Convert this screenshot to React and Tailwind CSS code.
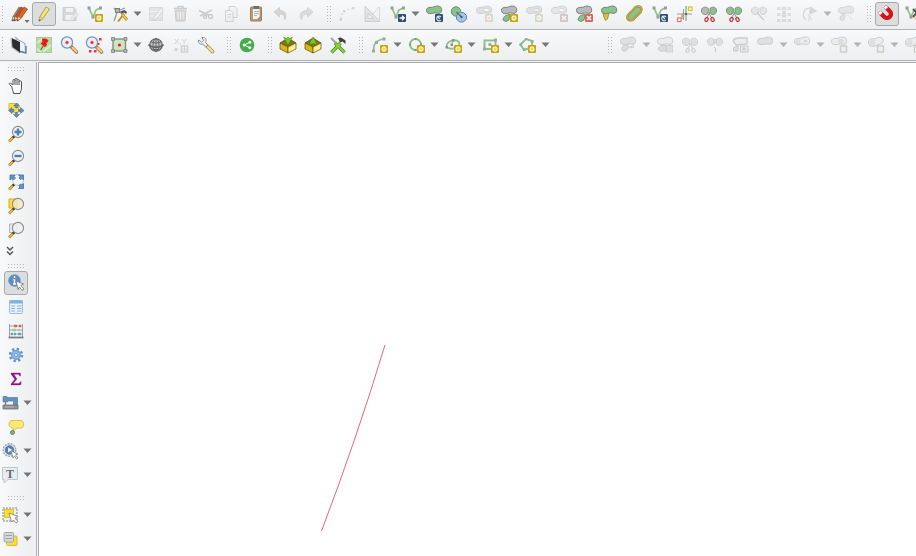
import React from "react";

const GREEN = "#8ac18c";
const EDGE = "#6f8a70";
const GREY = "#b9bab9";
const GREY_EDGE = "#7e7f7e";

/* ---------- shared glyph parts ---------- */

function Star({ x = 13, y = 12 }) {
  const cx = x + 4;
  const cy = y + 4;
  return (
    <g>
      <rect x={x} y={y} width="8" height="8" rx="1" fill="#c9a50c" />
      <path
        d={`M${cx} ${cy - 3}V${cy + 3}M${cx - 3} ${cy}H${cx + 3}M${cx - 2} ${cy - 2}L${cx + 2} ${cy + 2}M${cx - 2} ${cy + 2}L${cx + 2} ${cy - 2}`}
        stroke="#fff6c8"
        strokeWidth="1.1"
      />
      <circle cx={cx} cy={cy} r="0.8" fill="#c9a50c" />
    </g>
  );
}

function Cross({ x = 13, y = 12 }) {
  return (
    <g>
      <rect x={x} y={y} width="8" height="8" rx="1" fill="#e0625d" />
      <path d={`M${x + 2} ${y + 2}l4 4m0 -4l-4 4`} stroke="#fff" strokeWidth="1.6" />
    </g>
  );
}

function Turn({ x = 13, y = 12 }) {
  return (
    <g>
      <rect x={x} y={y} width="8" height="8" rx="1" fill="#2f4e70" />
      <path d={`M${x + 6} ${y + 3}A2.4 2.4 0 1 0 ${x + 6} ${y + 6}M${x + 2} ${y + 2}l3 3`} stroke="#dfe7f0" strokeWidth="1.1" fill="none" />
    </g>
  );
}

const BLOB = "M4.500 8.500C4.300 6 6.500 5.200 9 5.400C11.500 5.600 12.500 4 15.500 4C18.500 4 20 6 19.700 8.500C19.400 11 17.500 11.800 15.500 11.200C13 10.500 11.500 11.300 9 11.600C6.500 11.900 4.700 11 4.500 8.500Z";

function Blob({ fill = GREEN, edge = EDGE }) {
  return <path d={BLOB} fill={fill} stroke={edge} strokeWidth="1" />;
}

function Lobes({ left, right }) {
  return (
    <g>
      <path d="M11.300 6.500C9.500 4.500 5 4.500 4.500 8C4.200 11 6.500 13 9 12.500C10.500 12.200 11.300 11 11.300 9.500Z" fill={left} stroke={EDGE} strokeWidth="0.9" />
      <path d="M13 6.500C14.500 4.500 19 4.500 19.500 8C19.800 11 17.500 13 15.300 12.500C13.800 12.200 13 11 13 9.500Z" fill={right} stroke={EDGE} strokeWidth="0.9" />
    </g>
  );
}

function Shears({ left, right, blade = "#c4393d" }) {
  return (
    <g>
      <Lobes left={left} right={right} />
      <path d="M11.500 10L14.500 15.500M12.800 10L10 15.500" stroke="#999" strokeWidth="1.100" />
      <ellipse cx="9.500" cy="17.500" rx="1.500" ry="2" transform="rotate(30 9.500 17.500)" fill="#f6e9e9" stroke={blade} strokeWidth="1.300" />
      <ellipse cx="15.500" cy="17.500" rx="1.500" ry="2" transform="rotate(-30 15.500 17.500)" fill="#f6e9e9" stroke={blade} strokeWidth="1.300" />
    </g>
  );
}

function Vee() {
  return (
    <g>
      <path d="M7 6L11 15L14 8L18 6" fill="none" stroke={GREEN} strokeWidth="1.700" />
      <path d="M5.500 4.500h3v3h-3zM9.500 13.500h3v3h-3zM17 4.500h3v3h-3z" fill="#979d97" />
    </g>
  );
}

function Lens({ inner, face = "#eef0f0", rim = "#8a8d8e" }) {
  return (
    <g>
      <path d="M10 14.500L5 19.500" stroke="#a6812d" strokeWidth="2.600" />
      <path d="M8.500 16L5 19.500" stroke="#f0b93c" strokeWidth="1.400" />
      <path d="M10.500 14L9 15.500" stroke="#333" strokeWidth="2.400" />
      <circle cx="14" cy="10" r="5.600" fill={face} fillOpacity="0.85" stroke={rim} strokeWidth="1.100" />
      {inner}
    </g>
  );
}

function BigLens({ children }) {
  return (
    <g>
      <path d="M14.500 14L19.500 19" stroke="#a37a3a" strokeWidth="3.600" strokeLinecap="round" />
      <path d="M15.500 14.800L19.500 18.800" stroke="#f9c987" strokeWidth="2" strokeLinecap="round" />
      <circle cx="10" cy="9.500" r="5.600" fill="#e4f0fc" stroke="#7d93b5" strokeWidth="1.300" />
      <circle cx="10" cy="9.500" r="1.700" fill="#fb1c1c" stroke="#fbb" strokeWidth="0.6" />
      {children}
    </g>
  );
}

function Pencil({ color, edge, x = 0, shine = true }) {
  return (
    <g transform={`translate(${x} 0)`}>
      <path d="M7 19L8 14.500L14 5L17.500 7L11 16.500Z" fill={color} stroke={edge} strokeWidth="0.8" />
      {shine && <path d="M10 15L15.700 6" stroke="#fff" strokeOpacity="0.5" strokeWidth="1" />}
      <path d="M7 19L8 14.500L11 16.500Z" fill="#ecd9b3" stroke={edge} strokeWidth="0.5" />
      <path d="M7 19.300L7.600 17.200L8.800 18Z" fill="#333" />
    </g>
  );
}

function Arrowhead() {
  return <path d="M0.500 0.500H8.500L4.500 5Z" fill="#747677" />;
}

function BoxIcon({ up }) {
  return (
    <g>
      <path d="M4 10L12 5L20 10L12 14Z" fill="#8a7216" stroke="#4c3f08" strokeWidth="0.7" />
      <path d="M4 10L12 14V20L4 16Z" fill="#d9b714" stroke="#5e4f0b" strokeWidth="0.7" />
      <path d="M20 10L12 14V20L20 16Z" fill="#fbef8b" stroke="#5e4f0b" strokeWidth="0.7" />
      {up ? (
        <path d="M12 4L16 11.500L12 10.500L8 11.500Z" fill="#6fd021" stroke="#467d16" strokeWidth="0.5" />
      ) : (
        <path d="M7.500 4L10.500 5.500L12 4L13.500 5.500L16.500 4L12 12Z" fill="#6fd021" stroke="#467d16" strokeWidth="0.5" />
      )}
    </g>
  );
}

const NODE = "#a2a5a2";

/* ---------- icons ---------- */

const icons = {
  edits: (
    <g>
      <Pencil color="#a3816f" edge="#85766f" x={-2} shine={false} />
      <Pencil color="#b9573a" edge="#8d4a36" x={0} shine={false} />
      <Pencil color="#dc6627" edge="#a3501f" x={3} shine={false} />
      <path d="M17.500 18H22.500L20 21Z" fill="#6c6e70" />
    </g>
  ),
  pencil: <Pencil color="#f4dc55" edge="#a0964f" />,
  save: (
    <g>
      <path d="M6 5.500H17L19 7.500V18.500H6Z" fill="#a2a4a4" stroke="#858787" />
      <path d="M9 6H16V10H9ZM8.500 13H16V18H8.500Z" fill="#eee" />
      <path d="M13 19L14 16L19 10L21 12L16 18Z" fill="#ddd" stroke="#999" strokeWidth="0.7" />
    </g>
  ),
  addLine: (<g><Vee /><Star /></g>),
  vertex: (
    <g>
      <path d="M7 19L10 11M10 10L7 6M13 8L18 6" fill="none" stroke="#959a98" strokeWidth="1.300" />
      <rect x="8.500" y="6.500" width="4" height="4" fill="#b2b6b3" stroke="#7c807d" />
      <path d="M11 19.500L17 12" stroke="#b68a2a" strokeWidth="1.800" />
      <path d="M15 12L20 18" stroke="#b68410" strokeWidth="2.800" />
      <path d="M15.500 12.500L20 18" stroke="#ffd33c" strokeWidth="1.400" />
      <path d="M13 9.500L17.500 8L20 10L19 12L17 10.500L14 12Z" fill="#555" />
    </g>
  ),
  table: (
    <g>
      <path d="M5.500 5.500H18.500V18.500H5.500Z" fill="#c4c5c5" stroke="#aaa" />
      <path d="M5.500 9.500H18.500M5.500 14H18.500" stroke="#eee" />
      <path d="M9 18L10 15L17 6L19.500 8L12.500 17Z" fill="#eee" stroke="#999" strokeWidth="0.8" />
    </g>
  ),
  trash: (
    <g>
      <path d="M6 8H17L16 19H7Z" fill="#cf9b90" stroke="#9b7f7a" />
      <path d="M5 6.500H18M9 6V4.500H14V6" fill="none" stroke="#9b7f7a" strokeWidth="1.600" />
      <path d="M9 10V17M11.500 10V17M14 10V17" stroke="#f3e5e2" />
    </g>
  ),
  cut: (
    <g fill="none" stroke="#7d7d7d">
      <path d="M5 8.500L15 13.500M6 14L18 8" strokeWidth="1.700" />
      <circle cx="16.500" cy="14.500" r="2" strokeWidth="1.300" />
      <circle cx="11" cy="15" r="1.500" strokeWidth="1.300" />
    </g>
  ),
  copy: (
    <g fill="#eee" stroke="#909090">
      <path d="M10 4.500H16L18 6.500V15.500H10Z" />
      <path d="M6.500 8.500H12L14 10.500V19.500H6.500Z" />
      <path d="M8.500 12.500H12M8.500 15H12" />
    </g>
  ),
  paste: (
    <g>
      <rect x="6.500" y="5" width="11" height="14" rx="1" fill="#cc9c5b" stroke="#a37d48" />
      <rect x="8.500" y="6.500" width="7.500" height="11" fill="#f1f1ef" stroke="#888" strokeWidth="0.6" />
      <rect x="9.500" y="4" width="5.500" height="3" fill="#6d7072" />
      <path d="M10 9.500H15M10 11.500H15M10 13.500H13" stroke="#b4b6b6" />
      <path d="M13 17.500L16 14.500V17.500Z" fill="#888" />
    </g>
  ),
  undo: <path d="M5 10L10.500 5.500V8.500C16 8.500 18.500 12 15.500 18C16 14 14.500 12 10.500 12V15Z" fill="#b39a8c" stroke="#9d867a" />,
  redo: <path d="M19 10L13.500 5.500V8.500C7 8.500 4.500 12 7.500 18C8 14 9.500 12 13.500 12V15Z" fill="#a9b0a9" stroke="#939993" />,
  arcDots: (
    <g>
      <path d="M6 17C6 10 10 7 17 7" fill="none" stroke="#a5b7a5" strokeWidth="1.300" strokeDasharray="2 2" />
      <path d="M4.500 16.500h2.500v2.500h-2.500zM8 8h2.500v2.500h-2.500zM17 5h2.500v2.500h-2.500z" fill="#a2a2a2" />
    </g>
  ),
  ruler: (
    <g>
      <path d="M5 4V19.500H20Z" fill="#c8c6bc" stroke="#8d8b85" />
      <path d="M8 11V16.500H13.500Z" fill="#f3f3f3" stroke="#8d8b85" />
      <path d="M19.500 5V18.500M13 12L19 5" stroke="#aaa" />
    </g>
  ),
  moveLine: (
    <g>
      <Vee />
      <rect x="13" y="12" width="8" height="8" rx="1" fill="#2f4e70" />
      <path d="M14.500 16H19M17 13.800L19.300 16L17 18.200" stroke="#fff" strokeWidth="1.300" fill="none" />
    </g>
  ),
  rotate: (<g><Blob /><Turn /></g>),
  simplify: (
    <g>
      <circle cx="9" cy="9.500" r="4.700" fill={GREEN} stroke={EDGE} strokeWidth="1" />
      <path d="M12.500 10.500H16.500L19.500 13.500V17L16.500 20H12.500L9.500 17V13.500Z" fill="#a3c5e2" stroke="#6488aa" strokeWidth="1" />
      <path d="M9.500 10L14.500 15" stroke="#476d8c" strokeWidth="1.200" />
      <circle cx="14.500" cy="15" r="1.200" fill="#3d607e" />
    </g>
  ),
  ring: (
    <g>
      <Blob fill={GREY} edge="#888" />
      <ellipse cx="14.500" cy="8" rx="3" ry="1.700" fill="#fff" stroke="#999" />
      <Star />
    </g>
  ),
  part: (
    <g>
      <Blob fill={GREY} edge={GREY_EDGE} />
      <path d="M6 18C6 15 9 12.500 13 12.500L12 18Q9 21 6 18Z" fill={GREEN} stroke={EDGE} strokeWidth="0.9" />
      <Star />
    </g>
  ),
  fillRing: (
    <g>
      <Blob fill={GREY} edge="#888" />
      <ellipse cx="14.500" cy="8" rx="3" ry="1.700" fill="#ddd" stroke="#999" />
      <Star />
    </g>
  ),
  delRing: (
    <g>
      <Blob fill="#ccc" edge="#888" />
      <ellipse cx="14.500" cy="8" rx="3" ry="1.700" fill="#fff" stroke="#999" />
      <Cross />
    </g>
  ),
  delPart: (
    <g>
      <Blob fill={GREY} edge={GREY_EDGE} />
      <path d="M6 18C6 15 9 12.500 13 12.500L12 18Q9 21 6 18Z" fill={GREEN} stroke={EDGE} strokeWidth="0.9" />
      <Cross />
    </g>
  ),
  reshape: (
    <g>
      <path d="M5.500 9H12.500L10.500 17L8.500 18.500L6.500 14Z" fill="#e1bd41" stroke="#aa8c2c" strokeWidth="0.9" />
      <Blob />
    </g>
  ),
  offset: (
    <g>
      <path d="M5.500 14C7 10 10 10 12 6.500C14 3 20 4 19.500 8C19 13 15 12 13 16C10 20 4 19 5.500 14Z" fill={GREEN} stroke="#a08a35" strokeWidth="2.200" />
      <path d="M5.500 14C7 10 10 10 12 6.500C14 3 20 4 19.500 8C19 13 15 12 13 16C10 20 4 19 5.500 14Z" fill="none" stroke="#c9a744" strokeWidth="1.300" />
    </g>
  ),
  reverse: (<g><Vee /><Turn /></g>),
  trim: (
    <g>
      <path d="M5 12H20M11.500 7V18" stroke="#97a09a" strokeWidth="1.100" />
      <path d="M14 4V19" stroke={GREEN} strokeWidth="1.500" />
      <rect x="16.500" y="5" width="3.500" height="3.500" fill="#fffbd2" stroke="#e2bc2c" strokeWidth="1.200" />
      <path d="M10 12V17" stroke="#e57371" strokeWidth="1.200" />
      <rect x="5.500" y="16" width="3.500" height="3.500" fill="#fff" stroke="#e57371" strokeWidth="1.200" />
      <circle cx="14" cy="12" r="1.300" fill="#686d6a" />
    </g>
  ),
  split: <Shears left={GREY} right={GREEN} />,
  splitParts: <Shears left={GREEN} right={GREEN} />,
  merge: (
    <g>
      <Lobes left="#c9c9c9" right="#c9c9c9" />
      <path d="M10 10L13 14L17 18" stroke="#888" strokeWidth="1.400" fill="none" />
    </g>
  ),
  mergeAttr: (
    <g>
      <path d="M5 6.500H19M5 12.500H19M5 18.500H19" stroke="#b4b4b4" strokeWidth="3" />
      <path d="M9 5V20M15 5V20" stroke="#f5f5f5" strokeWidth="1.200" />
      <path d="M12 8V11M10 9.500L12 11L14 9.500M10 15.500L12 14L14 15.500" stroke="#888" fill="none" />
    </g>
  ),
  rotSymbol: (
    <g>
      <path d="M12 6C6 7 4.500 14 9 18" fill="none" stroke="#a4a4a4" strokeWidth="1.300" />
      <path d="M13 5L19.500 9L13 12Z" fill="#aaa" stroke="#929292" />
      <path d="M12 12V19M12 13L15 18" fill="none" stroke="#aaa" />
    </g>
  ),
  offSymbol: (
    <g>
      <Blob fill="#c5c5c5" edge="#999" />
      <path d="M6 17C6 14 8 12.500 11 12.500L10.500 17Q8 20 6 17Z" fill="#c5c5c5" stroke="#999" />
      <path d="M13 12.500L18 17.500" stroke="#999" strokeDasharray="2 1" />
    </g>
  ),
  magnet: (
    <g transform="rotate(-45 12 12)">
      <path d="M8 7V12A4 4 0 0 0 16 12V7" fill="none" stroke="#b01010" strokeWidth="4.200" />
      <path d="M8 7.500V12A4 4 0 0 0 16 12V7.500" fill="none" stroke="#e01214" strokeWidth="3.200" />
      <path d="M6.200 5H9.800V8H6.200ZM14.200 5H17.800V8H14.200Z" fill="#fafafa" stroke="#b88" strokeWidth="0.7" />
    </g>
  ),
  snapAll: (
    <g>
      <Vee />
      <path d="M13 7L21 15M13 15L20 7" stroke="#555" strokeWidth="2" />
      <path d="M15 17L20 12" stroke="#eec73c" strokeWidth="2" />
    </g>
  ),
  /* second row */
  topo: (
    <g>
      <path d="M9 5.500L18 10.500L18.500 20L9 16.500Z" fill="#edf3f7" stroke="#8ba0b3" />
      <path d="M4.500 5L13 9V20L5 14.500Z" fill="#2c2d2e" />
      <path d="M4 4.500L5 14.500L12 19.500M8 4L11 6" fill="none" stroke="#b7bdc2" strokeWidth="1.200" />
      <path d="M13 18.500L19 20V13" fill="none" stroke="#527aa0" strokeWidth="1.300" />
    </g>
  ),
  pinMap: (
    <g>
      <rect x="4.500" y="4.500" width="15" height="15" fill="#b4dba2" stroke="#a5cd98" />
      <path d="M5 10L10 6M11 19L19 12M5 16L9 19" stroke="#dcebc8" strokeWidth="2" />
      <path d="M8.500 17L12 12" stroke="#666" strokeWidth="1.200" />
      <path d="M10 6C12 4.500 16.500 6 16.500 8L14.500 10L15 12L13 14L8.500 10.500L10.500 9Z" fill="#f0151a" />
    </g>
  ),
  lensDot: <BigLens />,
  lensDots: (
    <BigLens>
      <path d="M17 5h2.500v2.500h-2.500zM7 17h2.500v2.500h-2.500zM12 17h2.500v2.500h-2.500zM15.500 10h2v2h-2z" fill="#f52f35" />
    </BigLens>
  ),
  bbox: (
    <g>
      <rect x="6" y="6" width="12.500" height="12" fill="#c9e6c0" stroke="#7f8a7d" strokeWidth="1.300" />
      <path d="M4.500 4.500h3v3h-3zM17 4.500h3v3h-3zM4.500 16.500h3v3h-3zM17 16.500h3v3h-3z" fill="#b4b8b4" stroke="#7c807c" strokeWidth="0.8" />
      <circle cx="12.500" cy="12" r="1.600" fill="#ee1818" />
    </g>
  ),
  globe: (
    <g fill="none" stroke="#5d6061">
      <circle cx="12" cy="12" r="6.300" fill="#c4c6c6" strokeWidth="1.100" />
      <ellipse cx="12" cy="12" rx="3" ry="6.300" strokeWidth="0.9" />
      <path d="M12 5V19" strokeWidth="0.9" />
      <path d="M6.500 9Q12 11 17.500 9M7.500 16Q12 17.500 16.500 16" strokeWidth="0.9" />
      <path d="M4.500 11.500C7 15 17 15 19.500 11.500" strokeWidth="1.600" />
    </g>
  ),
  xy: (
    <g>
      <text x="5" y="11" fontSize="8" fontWeight="700" fill="#aaa" className="font-['Liberation_Sans',sans-serif]">X,Y</text>
      <circle cx="7" cy="16.500" r="1.700" fill="#999" />
      <rect x="12.500" y="13" width="6" height="6" fill="#eee" stroke="#999" strokeWidth="1.500" />
      <path d="M15.500 14V18M13.500 16H17.500" stroke="#999" />
    </g>
  ),
  wrench: (
    <g>
      <path d="M13.500 13.500L18.500 18.500" stroke="#a38a4f" strokeWidth="3.800" strokeLinecap="round" />
      <path d="M14 14L18.500 18.500" stroke="#f8dfa0" strokeWidth="2.400" strokeLinecap="round" />
      <path d="M8 4.500C12 4 13 7 11.500 9.500L14 12L11.500 14L9 11C6 12 4 10 4.500 7L7.500 9L9.500 7.500Z" fill="#eceeee" stroke="#8a8d8e" strokeWidth="0.9" />
    </g>
  ),
  share: (
    <g>
      <circle cx="12" cy="12" r="7.300" fill="#41ae4a" />
      <path d="M14.500 9.300L9.500 12L14.500 14.700" stroke="#fff" fill="none" strokeWidth="1" />
      <circle cx="14.800" cy="9.200" r="1.500" fill="#fff" />
      <circle cx="9.200" cy="12" r="1.500" fill="#fff" />
      <circle cx="14.800" cy="14.800" r="1.500" fill="#fff" />
    </g>
  ),
  boxDown: <BoxIcon />,
  boxUp: <BoxIcon up />,
  tools: (
    <g>
      <path d="M9 10L18.500 19.500M14.500 10L5.500 19.500" stroke="#4f8a1f" strokeWidth="3.400" />
      <path d="M9.500 10.500L18.500 19.500M14.500 10L5.500 19.500" stroke="#8bd23a" strokeWidth="2" />
      <path d="M12 5L15 4.500L19.500 7.500L19.500 11L16.500 8.500L14 9.500Z" fill="#3e4142" />
      <path d="M5 5L10 10" stroke="#9da1a2" strokeWidth="1.800" />
    </g>
  ),
  arc: (
    <g>
      <path d="M7 18C6 11 9 7 17 6" fill="none" stroke={GREEN} strokeWidth="1.700" />
      <path d="M5 16.500h3v3h-3zM8 8h3v3h-3zM15.500 4.500h3v3h-3z" fill={NODE} />
      <Star />
    </g>
  ),
  circle: (
    <g>
      <circle cx="11.500" cy="11.500" r="5.500" fill="none" stroke={GREEN} strokeWidth="2" />
      <path d="M10.500 5h2v2h-2zM5 10.500h2v2H5zM16 10.500h2v2h-2zM10.500 16h2v2h-2z" fill="#8d918d" />
      <Star />
    </g>
  ),
  ellipse: (
    <g>
      <ellipse cx="12" cy="11.500" rx="6.500" ry="4" transform="rotate(-15 12 11.500)" fill="none" stroke={GREEN} strokeWidth="1.800" />
      <path d="M10.500 12L12 7.500" stroke="#9ea29e" />
      <path d="M11 6h2.500v2.500h-2.500zM4.500 13h2.500v2.500h-2.500zM9.500 10.500h2.500v2.500h-2.500z" fill="#8d918d" />
      <Star />
    </g>
  ),
  rect: (
    <g>
      <rect x="6.500" y="7.500" width="11" height="8.500" fill="none" stroke={GREEN} strokeWidth="2" />
      <path d="M16 5.500h3v3h-3zM5 14.500h3v3H5zM10.500 10h3v3h-3z" fill={NODE} />
      <Star />
    </g>
  ),
  polygon: (
    <g>
      <path d="M11 6L17 8L17 14L9 17L5.500 11.500Z" fill="none" stroke={GREEN} strokeWidth="1.900" />
      <path d="M10 5h2v2h-2zM4.500 10.500h2.500v2.500H4.500zM16 7h2.500v2.500H16zM8 15.500h2.500v2.500H8z" fill={NODE} />
      <Star />
    </g>
  ),
  g1: (
    <g>
      <path d="M6 17C6 13 8 11.500 12 11.500L12 15Q10 20 6 17Z" fill={GREY} stroke={GREY_EDGE} />
      <Blob fill={GREY} edge={GREY_EDGE} />
      <path d="M13 14.500L18 13.500" stroke="#999" strokeWidth="2" />
    </g>
  ),
  g2: (
    <g>
      <Blob fill="#ddd" edge={GREY_EDGE} />
      <path d="M5 16Q7 11.500 13 12.500V18H7Z" fill={GREY} stroke={GREY_EDGE} />
      <rect x="13.500" y="12.500" width="6" height="6.500" fill="#cfb9b1" stroke="#999" />
    </g>
  ),
  g3: <Shears left={GREY} right={GREY} blade="#999" />,
  g4: (
    <g>
      <Lobes left={GREY} right={GREY} />
      <path d="M10 7H14M10 9.500H14M11 14L13 16L12 19" fill="none" stroke="#777" />
    </g>
  ),
  g5: (
    <g>
      <path d="M5 8Q6 5 12 5L19 5V11L8 12Z" fill="#ddd" stroke={GREY_EDGE} strokeWidth="1.300" />
      <path d="M5.500 18V14.500L10 13V18Z" fill={GREY} stroke={GREY_EDGE} />
      <path d="M12.500 13H20V19H12.500ZM16 14V18M14 16H18" fill="#ddd" stroke={GREY_EDGE} />
    </g>
  ),
  g6: <Blob fill={GREY} edge={GREY_EDGE} />,
  g7: (
    <g>
      <Blob fill="#ddd" edge={GREY_EDGE} />
      <path d="M5 8.500Q6 6 10.500 6V11Q5.500 12 5 8.500Z" fill={GREY} />
      <path d="M14 8H17" stroke="#999" strokeWidth="2" />
    </g>
  ),
  g8: (
    <g>
      <Blob fill="#ddd" edge={GREY_EDGE} />
      <ellipse cx="14" cy="8" rx="2.500" ry="1.500" fill={GREY} stroke="#999" strokeWidth="0.7" />
      <rect x="13.500" y="13" width="6" height="6" fill="#eee8d8" stroke="#948c75" strokeWidth="1.500" />
    </g>
  ),
  g9: (
    <g>
      <path d="M4.500 10C4 7 7 5 10 6L14 4.500C18 3.500 20 6 19 9C18 12 14 11 11 13C8 14 5 13 4.500 10Z" fill="#ddd" stroke={GREY_EDGE} />
      <path d="M5 9.500Q7 6 11 6.500V12Q6 14 5 9.500Z" fill={GREY} />
      <rect x="13.500" y="13" width="6" height="6" fill="#eee8d8" stroke="#948c75" strokeWidth="1.500" />
    </g>
  ),
  /* side column */
  hand: (
    <path
      d="M8 13L5.500 10.500C4.500 9.500 6 8.500 7 9.500L9 11V6.500C9 5 11 5 11 6.500V5.500C11 4 13 4 13 5.500V6C13 4.800 15 4.800 15 6.500V7.500C15 6.500 17.500 6.500 17.500 8V14C17.500 17 16.500 17 16 19.500H9.500C9.500 17 8 16 8 13ZM11 6V11M13 6V11M15 7V11"
      fill="#fff"
      stroke="#505152"
      strokeWidth="1"
    />
  ),
  panTo: (
    <g>
      <path d="M5 5.500H14L15 8V14L9 15L5 12Z" fill="#ffe13a" stroke="#d8bb2e" />
      <path d="M12.500 5L15.500 8H13.500V10H11.500V8H9.500ZM12.500 19.500L15.500 16.500H13.500V14.500H11.500V16.500H9.500ZM4.500 12.500L8 9.500V11.500H10V13.500H8V15.500ZM20 12.500L16.500 9.500V11.500H14.500V13.500H16.500V15.500Z" fill="#5d8cc4" stroke="#44709f" strokeWidth="0.6" />
    </g>
  ),
  zoomIn: <Lens inner={<path d="M14 6.500V13.500M10.500 10H17.500" stroke="#4b7fb8" strokeWidth="2.400" />} />,
  zoomOut: <Lens inner={<path d="M10.500 10H17.500" stroke="#4b7fb8" strokeWidth="2.400" />} />,
  zoomFull: (
    <g>
      <Lens face="#f5f5f5" rim="#c7c9ca" />
      <path
        d="M6 5H11L10 6.500L11.500 8L9.500 10L8 8.500L6 10ZM19.500 5V10L18 8.500L16.500 9.500L15 8L16 6.500L14.500 5ZM19.500 18.500H14.500L16 17L15 15.500L16.500 14L18 15L19.500 13.500Z"
        fill="#6291c7"
        stroke="#4f7aa8"
        strokeWidth="0.9"
      />
    </g>
  ),
  zoomSel: (
    <g>
      <path d="M5 5H13V14H5Z" fill="#ffdf2f" stroke="#d0b126" />
      <Lens face="#f0eac4" />
    </g>
  ),
  zoomLayer: (
    <g>
      <path d="M5.500 6H13V14.500H5.500Z" fill="#e8e8e8" stroke="#b5b5b5" />
      <Lens />
    </g>
  ),
  identify: (
    <g>
      <circle cx="10.500" cy="9.500" r="5.800" fill="#5c8fc6" stroke="#6d97c4" />
      <path d="M10.500 8.500V13M9 13H12M9.500 8.500H10.500" stroke="#fff" strokeWidth="1.500" />
      <circle cx="10.500" cy="6" r="1" fill="#fff" />
      <path d="M12 10L19.500 13L17 14.500L20 18L18 19.500L15.500 16L14 18.500Z" fill="#fff" stroke="#777" strokeWidth="0.9" />
    </g>
  ),
  attrs: (
    <g>
      <rect x="5.500" y="5.500" width="13" height="13" rx="1" fill="#e8f2fa" stroke="#9dbcd8" />
      <path d="M5.500 7H18.500" stroke="#7fb0de" strokeWidth="3" />
      <path d="M7 11H11M13 11H17.500M7 13.500H11M13 13.500H17.500M7 16H11M13 16H17.500" stroke="#8fb0cf" strokeWidth="1.200" />
    </g>
  ),
  abacus: (
    <g>
      <path d="M5.500 5V18.500M18.500 5V18.500M5 7H19M5 11H19M5 15H19" fill="none" stroke="#9c9e9f" strokeWidth="1" />
      <path d="M4.500 18.500H19.500" stroke="#7e8081" strokeWidth="1.800" />
      <path d="M10 7h3M15 7h2" stroke="#e05c5c" strokeWidth="2.600" />
      <path d="M8 11h4M14 11h1.500" stroke="#9ccf94" strokeWidth="2.600" />
      <path d="M7 15h2M10 15h2M14 15h3" stroke="#6f9dc8" strokeWidth="2.600" />
    </g>
  ),
  gear: (
    <g>
      <circle cx="12" cy="12" r="6" fill="none" stroke="#5d93cd" strokeWidth="2.400" strokeDasharray="2.350 2.350" />
      <circle cx="12" cy="12" r="4.400" fill="#8db8e4" stroke="#6c9ed3" strokeWidth="1.200" />
      <circle cx="12" cy="12" r="1.500" fill="#f3f6f9" stroke="#5d93cd" strokeWidth="0.8" />
    </g>
  ),
  sigma: <path d="M7 6H16.500V9H15.500C15.300 7.800 15 7.300 14 7.300H9.800L13 12L9.300 16.500H14.500C15.500 16.500 16 15.800 16.300 14.800H17.300L16.600 18H7V17L10.800 12.300L7 7Z" fill="#8b1290" stroke="#8b1290" strokeWidth="0.3" />,
  sewing: (
    <g>
      <path d="M5 5.500H9V6.500H19.500V14H15.500V10H10.500L9.500 11H5Z" fill="#6490c0" stroke="#567da6" strokeWidth="0.7" />
      <path d="M7.500 11V14" stroke="#777" strokeWidth="1.200" />
      <path d="M5 14H20V18H5Z" fill="#8f9295" stroke="#6d7072" strokeWidth="0.8" />
      <path d="M7 16H16" stroke="#b4b6b7" />
    </g>
  ),
  tip: (
    <g>
      <path d="M8 5.500H17C20.500 6 20.500 12 17.500 13H13L8.500 16.500L9.500 13H8C4 12 4 6 8 5.500Z" fill="#fde96d" stroke="#d3c05a" />
      <circle cx="8.500" cy="17.500" r="2" fill="#7fb47c" stroke="#5f8a5a" />
    </g>
  ),
  gearLens: (
    <g>
      <circle cx="11.500" cy="11" r="6.300" fill="#e0e2e3" stroke="#a4a7a9" strokeWidth="1.400" strokeDasharray="2 1" />
      <circle cx="11.500" cy="11" r="4.200" fill="#4d84bd" stroke="#4474a3" strokeWidth="0.8" />
      <path d="M10 8.500L14.500 11L10 13.500Z" fill="#e9f1f8" />
      <path d="M13 12L20 15L17.500 16L20 19L18.500 20L16.500 17L15 19Z" fill="#fff" stroke="#888" strokeWidth="0.9" />
    </g>
  ),
  label: (
    <g>
      <path d="M4.500 4.500H19.500V16.500H10L6 20V16.500H4.500Z" fill="#e8edf0" stroke="#bcc7cf" />
      <text x="12" y="15" textAnchor="middle" fontSize="12" fontWeight="700" fill="#67696b" className="font-['Liberation_Serif',serif]">T</text>
    </g>
  ),
  select: (
    <g>
      <rect x="5" y="5" width="14" height="13" fill="#eeefef" stroke="#888" strokeDasharray="2 1" />
      <path d="M6.500 6.500H15.500V14.500H6.500Z" fill="#ffdc25" stroke="#e2c232" />
      <path d="M11 10L20 13.500L17 15L20 18.500L18 20L15.500 17L13.500 19Z" fill="#fff" stroke="#888" strokeWidth="0.9" />
    </g>
  ),
  deselect: (
    <g>
      <rect x="8.500" y="9" width="10.500" height="9.500" rx="1" fill="#fbdc37" stroke="#d8ba2c" />
      <rect x="6" y="5.500" width="9.500" height="9.500" rx="1" fill="#d5d8d9" stroke="#a4a8aa" />
      <path d="M7.500 8.500H14M7.500 11.500H14" stroke="#9ea2a5" />
    </g>
  ),
};

/* ---------- controls ---------- */

function Tool({ name, active, off }) {
  return (
    <button
      type="button"
      aria-label={name}
      aria-pressed={active ? true : undefined}
      disabled={off}
      className={
        active
          ? "flex h-6 w-6 shrink-0 items-center justify-center rounded-[3px] border border-[#a8a9aa] bg-[#dcdddd]"
          : "flex h-6 w-6 shrink-0 items-center justify-center"
      }
    >
      <svg viewBox="0 0 24 24" className={off ? "h-6 w-6 shrink-0 opacity-35 grayscale-75" : "h-6 w-6 shrink-0"} aria-hidden="true">
        {icons[name]}
      </svg>
    </button>
  );
}

function Menu({ off }) {
  return (
    <button type="button" aria-label="More" disabled={off} className="flex h-6 w-[11px] shrink-0 items-center justify-center">
      <svg viewBox="0 0 9 6" className={off ? "h-[6px] w-[9px] opacity-50" : "h-[6px] w-[9px]"} aria-hidden="true">
        <Arrowhead />
      </svg>
    </button>
  );
}

function Grip({ first }) {
  return (
    <div className={first ? "flex h-6 w-[6px] shrink-0 items-center justify-end pr-px" : "flex h-6 w-[15px] shrink-0 items-center justify-end pr-[2px]"}>
      <svg width={first ? 3 : 5} height="17" aria-hidden="true">
        <path d={first ? "M0.500 0V17" : "M0.500 0V17M3.500 0V17"} stroke="#b4b6b8" strokeDasharray="1 2" />
      </svg>
    </div>
  );
}

function SideGrip({ tall }) {
  return (
    <div className={tall ? "flex h-4 items-center justify-center pt-[6px]" : "flex h-3 items-center justify-center pt-[2px]"}>
      <svg width="17" height="4" className="shrink-0" aria-hidden="true">
        <path d="M0 0.500H17M0 3.500H17" stroke="#b4b6b8" strokeDasharray="1 2" />
      </svg>
    </div>
  );
}

function Items({ list }) {
  return list.map((item, i) => {
    if (item === "|") return <Grip key={i} />;
    if (item === "v") return <Menu key={i} />;
    if (item === "-v") return <Menu key={i} off />;
    if (item === " ") return <div key={i} className="w-[47px] shrink-0" />;
    if (item[0] === "-") return <Tool key={i} name={item.slice(1)} off />;
    if (item[0] === "*") return <Tool key={i} name={item.slice(1)} active />;
    return <Tool key={i} name={item} />;
  });
}

const rowOne = [
  "edits", "*pencil", "-save", "addLine", "vertex", "v", "-table", "-trash", "-cut", "-copy", "paste", "-undo", "-redo", "|",
  "-arcDots", "-ruler", "moveLine", "v", "rotate", "simplify", "-ring", "part", "-fillRing", "-delRing", "delPart", "reshape",
  "offset", "reverse", "trim", "split", "splitParts", "-merge", "-mergeAttr", "-rotSymbol", "-v", "-offSymbol", "|", "*magnet", "snapAll",
];

const rowTwo = [
  "topo", "pinMap", "lensDot", "lensDots", "bbox", "v", "globe", "-xy", "wrench", "|", "share", "|", "boxDown", "boxUp", "tools", "|",
  "arc", "v", "circle", "v", "ellipse", "v", "rect", "v", "polygon", "v", " ", "|",
  "-g1", "-v", "-g2", "-g3", "-g4", "-g5", "-g6", "-v", "-g7", "-v", "-g8", "-v", "-g9", "-v", "-g9",
];

function SideTool({ name, menu, active }) {
  return (
    <div className={menu ? "flex items-center gap-0.5" : "flex items-center justify-center"}>
      <div className={menu ? "flex w-5 justify-center" : "flex"}>
        <Tool name={name} active={active} />
      </div>
      {menu && <Menu />}
    </div>
  );
}

export default function App() {
  return (
    <div className="flex h-screen flex-col overflow-hidden bg-[#f1f2f3] font-['Liberation_Sans',sans-serif]">
      <header className="shrink-0">
        <div role="toolbar" aria-label="Digitizing" className="flex h-[30px] gap-px overflow-hidden border-b border-[#b3b4b5] bg-linear-to-b from-[#f8f9fa] to-[#edeeef] pt-0.5">
          <Grip first />
          <Items list={rowOne} />
        </div>
        <div role="toolbar" aria-label="Plugins" className="flex h-[31px] gap-px overflow-hidden border-b border-[#b3b4b5] bg-linear-to-b from-[#f8f9fa] to-[#edeeef] pt-[3px]">
          <Grip first />
          <Items list={rowTwo} />
        </div>
      </header>
      <div className="flex min-h-0 flex-1 pt-px">
        <aside role="toolbar" aria-label="Navigation" className="w-[37px] shrink-0 overflow-hidden border-r border-[#b3b4b5] bg-linear-to-r from-[#f8f9fa] to-[#edeeef] pr-1">
          <SideGrip />
          <SideTool name="hand" />
          <SideTool name="panTo" />
          <SideTool name="zoomIn" />
          <SideTool name="zoomOut" />
          <SideTool name="zoomFull" />
          <SideTool name="zoomSel" />
          <SideTool name="zoomLayer" />
          <button type="button" aria-label="Show more tools" className="flex h-[17px] w-5 items-center justify-center">
            <svg width="8" height="10" aria-hidden="true">
              <path d="M1 1L4 4L7 1M1 5.500L4 8.500L7 5.500" fill="none" stroke="#555657" strokeWidth="1.500" />
            </svg>
          </button>
          <SideGrip />
          <SideTool name="identify" active />
          <SideTool name="attrs" />
          <SideTool name="abacus" />
          <SideTool name="gear" />
          <SideTool name="sigma" />
          <SideTool name="sewing" menu />
          <SideTool name="tip" />
          <SideTool name="gearLens" menu />
          <SideTool name="label" menu />
          <SideGrip tall />
          <SideTool name="select" menu />
          <SideTool name="deselect" menu />
        </aside>
        <main className="ml-px min-w-0 flex-1 border-l border-t border-[#a9aaab] bg-white">
          <svg className="block h-full w-full" role="img" aria-label="Map canvas">
            <path d="M346 282Q317.500 376 282.500 468" fill="none" stroke="#e8657f" strokeWidth="1" />
          </svg>
        </main>
      </div>
    </div>
  );
}
